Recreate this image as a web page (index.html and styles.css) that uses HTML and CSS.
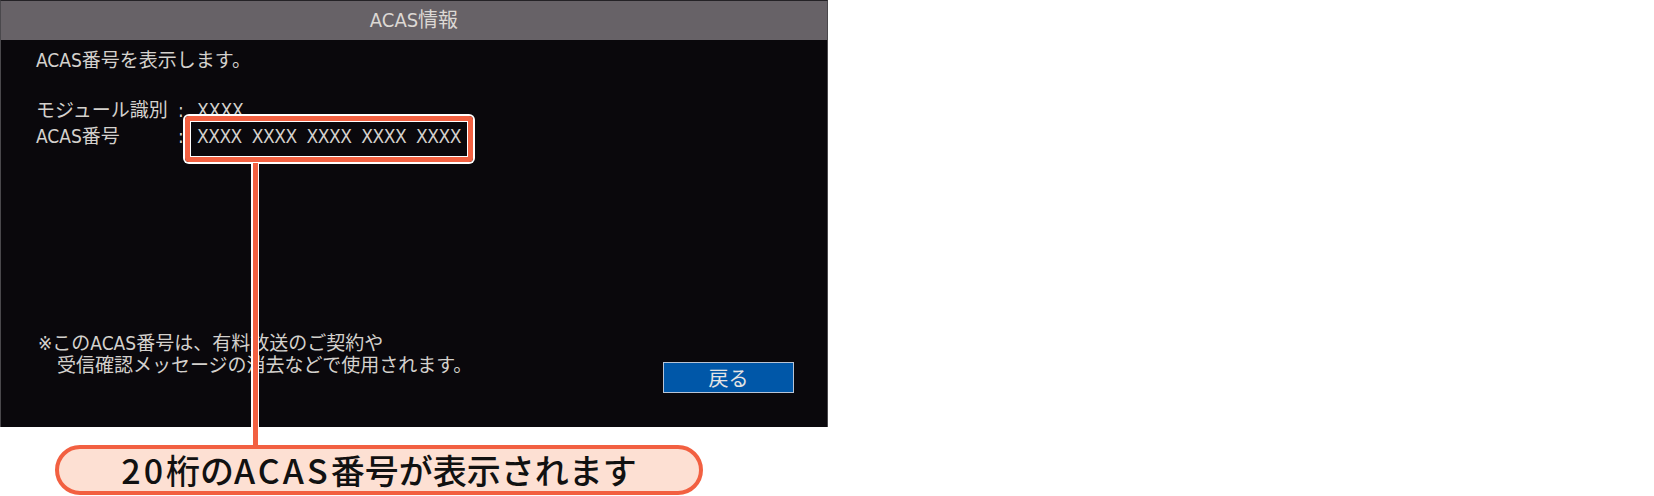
FILE: index.html
```html
<!DOCTYPE html>
<html lang="ja">
<head>
    <meta charset="UTF-8">
    <title>ACAS情報</title>
    <link rel="stylesheet" href="styles.css">
</head>
<body>
    <div class="figure">
        <!-- テレビ画面 -->
        <div class="screen">
            <div class="titlebar">ACAS情報</div>
            <div class="content">
                <p class="intro">ACAS番号を表示します。</p>
                <div class="info-row">
                    <span class="info-label">モジュール識別</span><span class="info-colon">:</span><span class="info-value">XXXX</span>
                </div>
                <div class="info-row">
                    <span class="info-label">ACAS番号</span><span class="info-colon">:</span><span class="info-value acas-number">XXXX XXXX XXXX XXXX XXXX</span>
                </div>
                <div class="footer">
                    <p class="note">※このACAS番号は、有料放送のご契約や<br>受信確認メッセージの消去などで使用されます。</p>
                    <button class="btn-back">戻る</button>
                </div>
            </div>
        </div>

        <!-- 説明の吹き出し -->
        <div class="callout"><span class="latin">20</span>桁の<span class="latin">ACAS</span>番号が表示されます</div>
    </div>
</body>
</html>
```

FILE: styles.css
```css
body {
    margin: 0;
    background-color: #fff;
    font-family: "Noto Sans CJK JP", sans-serif;
}
.figure {
    width: 828px;
}
.screen {
    display: flex;
    flex-direction: column;
    height: 426px;
    background-color: #0a080c;
    border-top: 1px solid #242226;
    border-left: 1px solid #4a484c;
    border-right: 1px solid #4a484c;
    color: #d4d1cd;
    font-family: "Liberation Sans Narrow", "DejaVu Sans Condensed", "Noto Sans CJK JP", sans-serif;
}
.titlebar {
    height: 39px;
    line-height: 39px;
    background-color: #676267;
    color: #dcd8d4;
    font-size: 20px;
    text-align: center;
}
.content {
    flex: 1;
    display: flex;
    flex-direction: column;
    padding: 7px 33px 34px 35px;
    font-size: 19px;
    line-height: 26px;
}
.intro {
    margin: 0 0 24px;
}
.info-label {
    display: inline-block;
    width: 142px;
}
.info-colon {
    display: inline-block;
    width: 19px;
}
.info-value {
    display: inline-block;
}
.acas-number {
    position: relative;
    letter-spacing: -0.5px;
    word-spacing: 5px;
}
/* 赤枠 */
.acas-number::before {
    content: '';
    position: absolute;
    left: -12px;
    right: -12px;
    top: -7px;
    bottom: -13px;
    border: 5px solid #f26041;
    border-radius: 4px;
    box-shadow: 0 0 0 2px #fff, inset 0 0 0 1px #fff;
}
/* 吹き出しへの線 */
.acas-number::after {
    content: '';
    position: absolute;
    left: 54px;
    top: 40px;
    width: 5px;
    height: 282px;
    background-color: #f26041;
    border-left: 2px solid #fff;
    border-right: 1px solid #fff;
    z-index: 2;
}
.footer {
    margin-top: auto;
    display: flex;
    justify-content: space-between;
    align-items: flex-end;
}
.note {
    margin: 0 0 17px;
    padding-left: 21px;
    text-indent: -19px;
    line-height: 22px;
}
.btn-back {
    width: 131px;
    height: 31px;
    padding: 0;
    background-color: #0057a8;
    border: 1px solid #b8c4d6;
    color: #e4e4e4;
    font-family: inherit;
    font-size: 20px;
}
.callout {
    box-sizing: border-box;
    width: 648px;
    height: 50px;
    margin: 18px 0 0 55px;
    border: 4px solid #f26041;
    border-radius: 25px;
    background-color: #fde0d3;
    color: #111;
    font-size: 34px;
    font-weight: 500;
    line-height: 42px;
    text-align: center;
}
.callout .latin {
    letter-spacing: 3px;
}
```
